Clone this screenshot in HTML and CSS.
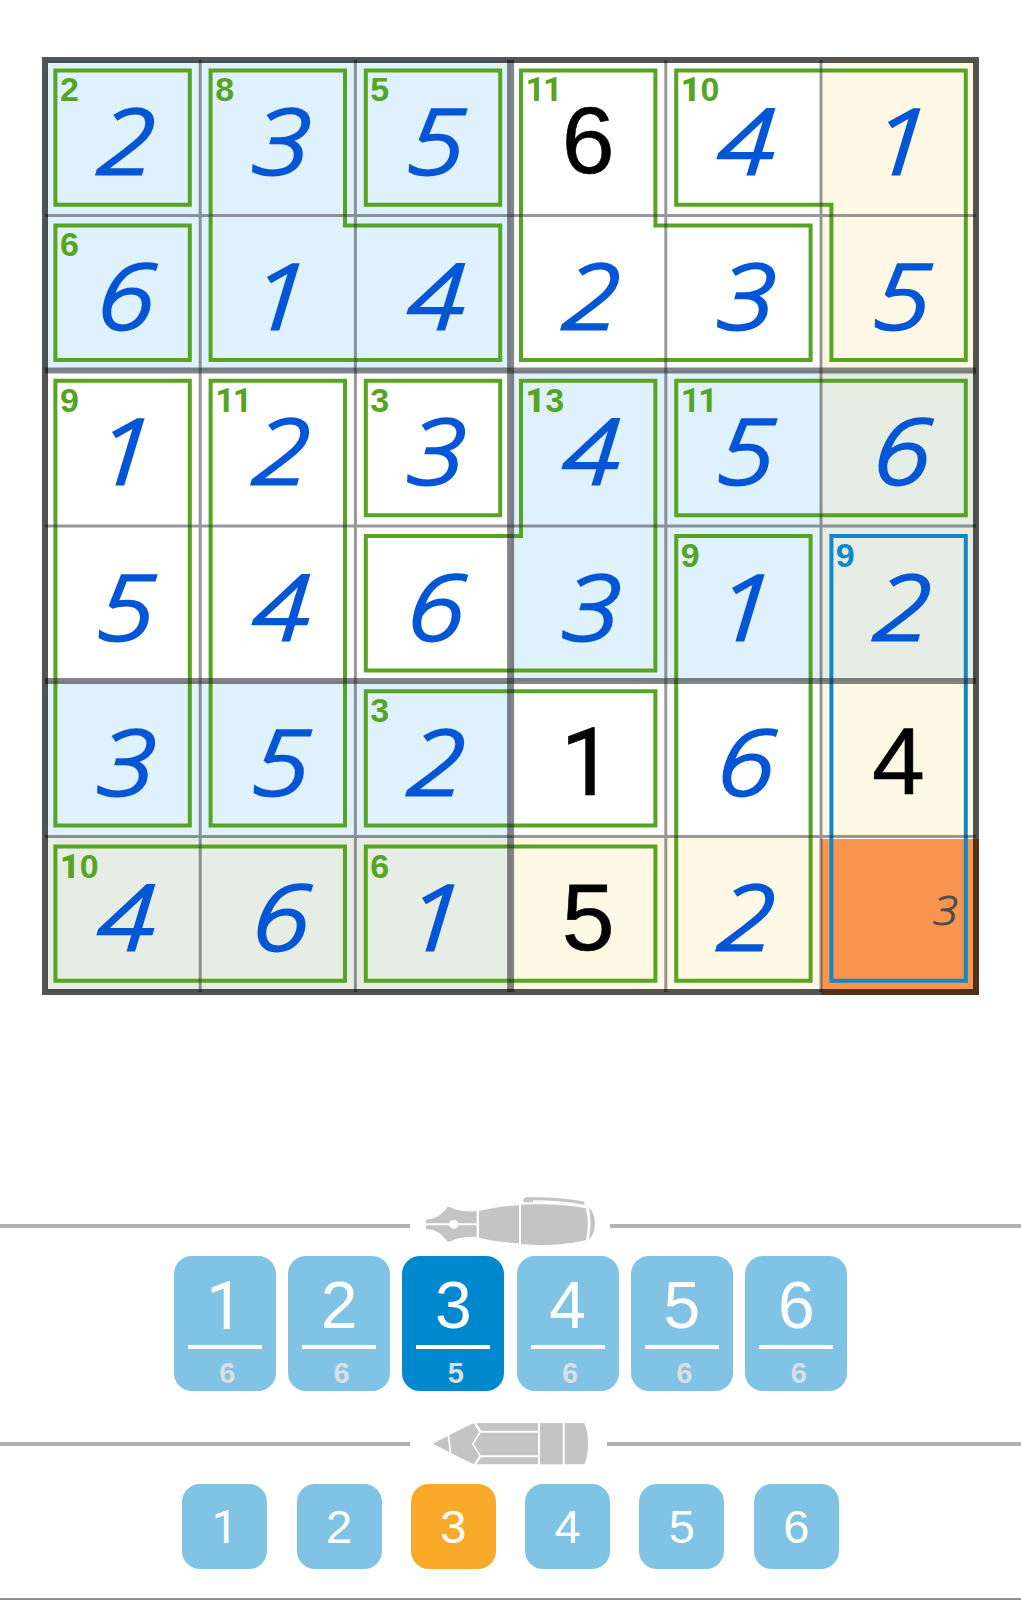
FILE: index.html
```html
<!DOCTYPE html>
<html lang="en">
<head>
  <meta charset="UTF-8">
  <meta name="viewport" content="width=device-width, initial-scale=1.0">
  <title>Killer Sudoku 6x6</title>
  <link rel="stylesheet" href="styles.css">
</head>
<body>
  <!-- Board -->
  <div class="board">
    <div class="cells">
      <div class="cell blue"><span class="sum">2</span><span class="pen">2</span></div>
      <div class="cell blue"><span class="sum">8</span><span class="pen">3</span></div>
      <div class="cell blue"><span class="sum">5</span><span class="pen">5</span></div>
      <div class="cell"><span class="sum eleven">11</span><span class="given">6</span></div>
      <div class="cell"><span class="sum"><b>1</b>0</span><span class="pen">4</span></div>
      <div class="cell yellow"><span class="pen one">1</span></div>

      <div class="cell blue"><span class="sum">6</span><span class="pen">6</span></div>
      <div class="cell blue"><span class="pen one">1</span></div>
      <div class="cell blue"><span class="pen">4</span></div>
      <div class="cell"><span class="pen">2</span></div>
      <div class="cell"><span class="pen">3</span></div>
      <div class="cell yellow"><span class="pen">5</span></div>

      <div class="cell"><span class="sum">9</span><span class="pen one">1</span></div>
      <div class="cell"><span class="sum eleven">11</span><span class="pen">2</span></div>
      <div class="cell"><span class="sum">3</span><span class="pen">3</span></div>
      <div class="cell blue"><span class="sum"><b>1</b>3</span><span class="pen">4</span></div>
      <div class="cell blue"><span class="sum eleven">11</span><span class="pen">5</span></div>
      <div class="cell green"><span class="pen">6</span></div>

      <div class="cell"><span class="pen">5</span></div>
      <div class="cell"><span class="pen">4</span></div>
      <div class="cell"><span class="pen">6</span></div>
      <div class="cell blue"><span class="pen">3</span></div>
      <div class="cell blue"><span class="sum">9</span><span class="pen one">1</span></div>
      <div class="cell green"><span class="sum active">9</span><span class="pen">2</span></div>

      <div class="cell blue"><span class="pen">3</span></div>
      <div class="cell blue"><span class="pen">5</span></div>
      <div class="cell blue"><span class="sum">3</span><span class="pen">2</span></div>
      <div class="cell"><span class="given plain-one">1</span></div>
      <div class="cell"><span class="pen">6</span></div>
      <div class="cell yellow"><span class="given">4</span></div>

      <div class="cell green"><span class="sum"><b>1</b>0</span><span class="pen">4</span></div>
      <div class="cell green"><span class="pen">6</span></div>
      <div class="cell green"><span class="sum">6</span><span class="pen one">1</span></div>
      <div class="cell yellow"><span class="given">5</span></div>
      <div class="cell yellow"><span class="pen">2</span></div>
      <div class="cell selected"><span class="note">3</span></div>
    </div>

    <!-- Cages and grid lines -->
    <svg class="lines" viewBox="0 0 937 938">
      <rect class="picked" x="779" y="782" width="158" height="156"/>
      <g class="cages">
        <path d="M13.4 13.4H147.8V147.8H13.4Z"/>
        <path d="M168.6 13.4H303V168.6H458.2V303H168.6Z"/>
        <path d="M323.8 13.4H458.2V147.8H323.8Z"/>
        <path d="M479 13.4H613.4V168.6H768.6V303H479Z"/>
        <path d="M634.2 13.4H923.8V303H789.4V147.8H634.2Z"/>
        <path d="M13.4 168.6H147.8V303H13.4Z"/>
        <path d="M13.4 323.8H147.8V768.6H13.4Z"/>
        <path d="M168.6 323.8H303V768.6H168.6Z"/>
        <path d="M323.8 323.8H458.2V458.2H323.8Z"/>
        <path d="M479 323.8H613.4V613.4H323.8V479H479Z"/>
        <path d="M634.2 323.8H923.8V458.2H634.2Z"/>
        <path d="M634.2 479H768.6V923.8H634.2Z"/>
        <path d="M323.8 634.2H613.4V768.6H323.8Z"/>
        <path d="M13.4 789.4H303V923.8H13.4Z"/>
        <path d="M323.8 789.4H613.4V923.8H323.8Z"/>
        <path class="active" d="M789.4 479H923.8V923.8H789.4Z"/>
      </g>
      <path class="thin" d="M158.2 3V935M313.4 3V935M623.8 3V935M779 3V935M3 158.5H934M3 469H934M3 779.5H934"/>
      <path class="thick" d="M3 313.5H934M3 624H934"/>
      <path class="thick middle" d="M468.6 3V935"/>
      <rect class="frame" x="3" y="3" width="931" height="932"/>
    </svg>
  </div>

  <!-- Pen buttons -->
  <div class="divider">
    <svg width="200" height="60" viewBox="30 47 600 180">
      <path d="M78 129V118L84 117C107 115 129 100 143 79L152 81C170 92 197 94 230 93V129H175A14 14 0 0 0 148 129Z"/>
      <path d="M78 135V146L84 147C107 148 129 163 143 185L152 183C170 172 197 169 230 169V135H175A14 14 0 0 1 148 135Z"/>
      <path d="M237 92C270 83 315 77 357 75V189C315 186 270 181 237 172Z"/>
      <path d="M363 73C435 69 500 73 558 84C565 115 565 148 558 179C500 194 430 197 363 191Z"/>
      <path d="M567 84C591 99 591 161 566 178C573 145 573 116 567 84Z"/>
      <path d="M370 66V59Q371 51 382 51C440 50 505 54 553 64V73C505 64 450 60 399 60V66Z"/>
    </svg>
  </div>
  <div class="buttons">
    <div class="key"><span class="plain-one">1</span><small>6</small></div>
    <div class="key"><span>2</span><small>6</small></div>
    <div class="key on"><span>3</span><small>5</small></div>
    <div class="key"><span>4</span><small>6</small></div>
    <div class="key"><span>5</span><small>6</small></div>
    <div class="key"><span>6</span><small>6</small></div>
  </div>

  <!-- Pencil buttons -->
  <div class="divider second">
    <svg width="197" height="60" viewBox="30 41 591 180">
      <path d="M98 130L143 107L149 156Z"/>
      <path d="M148 104L221 68L237 95L216 131L238 167L221 192L154 159Z"/>
      <path d="M229 68H414V91H243Z"/>
      <path d="M242 97H414V165H242L221 131Z"/>
      <path d="M243 171H414V192H229Z"/>
      <path d="M420 68H488V192H420Z"/>
      <path d="M494 68H553Q564 90 564 130Q564 170 553 192H494Z"/>
    </svg>
  </div>
  <div class="buttons notes">
    <div class="key plain-one">1</div>
    <div class="key">2</div>
    <div class="key on">3</div>
    <div class="key">4</div>
    <div class="key">5</div>
    <div class="key">6</div>
  </div>
  <div class="bottom-line"></div>
</body>
</html>
```
FILE: styles.css
```css
body {
  box-sizing: border-box;
  height: 1600px;
  margin: 0;
  padding-top: 57px;
  background: #fff;
  font-family: "Liberation Sans", Arial, sans-serif;
  display: flex;
  flex-direction: column;
  overflow: hidden;
}

/* Board */
.board {
  position: relative;
  box-sizing: border-box;
  width: 937px;
  height: 938px;
  margin-left: 42px;
  padding: 3px;
}

.cells {
  display: grid;
  grid-template-columns: repeat(6, 1fr);
  grid-template-rows: repeat(6, 1fr);
  height: 100%;
}

.cell {
  position: relative;
  display: flex;
  justify-content: center;
  align-items: center;
}

.blue { background: #dff1fd; }
.yellow { background: #fff8e4; }
.green { background: #e5ede4; }

.given, .pen, .note {
  position: relative;
  z-index: 2;
  line-height: 1;
}

.given {
  padding-top: 6px;
  font-size: 95px;
  color: #000;
  -webkit-text-stroke: 0.6px #000;
}

/* The one has no foot */
.plain-one, .sum b, .eleven {
  font-family: Roboto, "Liberation Sans", sans-serif;
}

.given.plain-one {
  padding-top: 7px;
  padding-right: 2px;
}

.pen, .note {
  font-family: "Open Sans", "Noto Sans", sans-serif;
  font-style: italic;
  font-weight: 300;
  color: #0356d6;
  stroke-linejoin: round;
}

.pen {
  font-size: 90px;
  -webkit-text-stroke: 3.2px #0356d6;
  transform: translate(4px, 1px) scaleX(1.14) skewX(-3deg);
}

.one {
  padding-right: 2px;
}

.note {
  font-size: 41px;
  color: #4d4d4d;
  margin-left: auto;
  padding-right: 18px;
  padding-bottom: 10px;
  -webkit-text-stroke: 1px #4d4d4d;
  transform: scaleX(1.1);
}

/* Cage sum in the cell corner */
.sum {
  position: absolute;
  z-index: 2;
  left: 15px;
  top: 10px;
  font-size: 34px;
  line-height: 38px;
  font-weight: bold;
  color: #57a423;
}

.sum.active { color: #0f87c8; }

.eleven { letter-spacing: -2px; }

.lines {
  position: absolute;
  left: 0;
  top: 0;
  width: 937px;
  height: 938px;
  fill: none;
}

.cages {
  stroke: #57a423;
  stroke-width: 4;
}

.cages .active { stroke: #0f87c8; }

.thin {
  stroke: rgba(50, 50, 55, 0.5);
  stroke-width: 3;
}

.thick {
  stroke: rgba(30, 30, 35, 0.54);
  stroke-width: 6;
}

.middle { stroke-width: 7; }

.frame {
  stroke: rgba(0, 0, 0, 0.67);
  stroke-width: 6;
}

.picked { fill: #f9954f; }

/* Line with the pen or pencil in the middle */
.divider {
  display: flex;
  align-items: center;
  height: 60px;
  margin-top: 201px;
}

.divider::before,
.divider::after {
  content: "";
  height: 4px;
  background: #b1b1b1;
}

.divider::before { width: 410px; }
.divider::after { flex: 1; }

.divider svg { fill: #c4c4c4; }

.second { margin-top: 23px; }

/* Number buttons */
.buttons {
  display: flex;
  justify-content: center;
  gap: 12.3px;
}

.key {
  width: 102px;
  height: 135px;
  border-radius: 18px;
  background: #80c3e4;
  color: #fff;
  text-align: center;
}

.key.on { background: #0088cf; }

.key span {
  display: block;
  height: 89px;
  margin: 0 14px;
  border-bottom: 4px solid #fff;
  font-size: 66px;
  line-height: 98px;
}

.key span.plain-one { line-height: 102px; }

.key small {
  display: block;
  padding-left: 5px;
  font-size: 29px;
  line-height: 49px;
  font-weight: bold;
  color: #d9dfe3;
}

.notes {
  margin-top: 10px;
  gap: 29.3px;
}

.notes .key {
  width: 85px;
  height: 85px;
  font-size: 47px;
  line-height: 85px;
}

.notes .on { background: #faaa2b; }

.bottom-line {
  height: 2px;
  margin-top: auto;
  background: #8f8f8f;
}
```
